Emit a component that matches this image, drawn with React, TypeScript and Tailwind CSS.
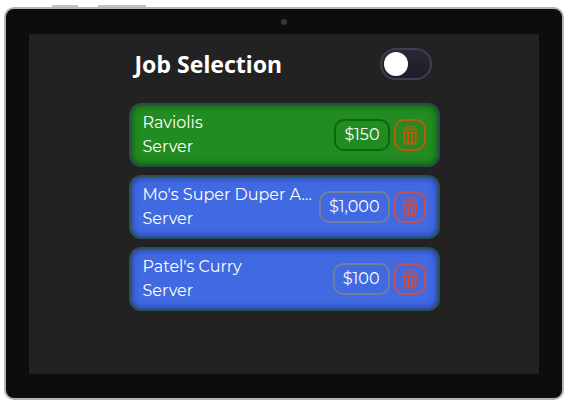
import { useState } from 'react'
import clsx from 'clsx'

type Job = {
  id: number
  business: string
  role: string
  pay: number
}

const initialJobs: Job[] = [
  { id: 1, business: 'Raviolis', role: 'Server', pay: 150 },
  { id: 2, business: "Mo's Super Duper Asian Kitchen", role: 'Server', pay: 1000 },
  { id: 3, business: "Patel's Curry", role: 'Server', pay: 100 },
]

const MAX_NAME_LENGTH = 18

const shorten = (name: string) =>
  name.length > MAX_NAME_LENGTH ? `${name.slice(0, MAX_NAME_LENGTH)}...` : name

function TrashIcon() {
  return (
    <svg viewBox="0 0 18 20" className="h-5 w-[18px]" fill="none" stroke="currentColor" aria-hidden="true">
      <path d="M6.3 4V2.4c0-.8.5-1.3 1.2-1.3h3c.7 0 1.2.5 1.2 1.3V4" strokeWidth="1.4" />
      <path d="M.8 4.4h16.4" strokeWidth="1.6" />
      <path d="M2.8 7.2h12.4l-.9 11.3H3.7z" strokeWidth="2" />
      <path d="M7.1 7.2v11.3M10.9 7.2v11.3" strokeWidth="1.9" />
    </svg>
  )
}

function Toggle() {
  const [on, setOn] = useState(false)

  return (
    <label className="relative block h-8 w-13 cursor-pointer">
      <input
        type="checkbox"
        role="switch"
        aria-label="On duty"
        checked={on}
        onChange={(e) => setOn(e.target.checked)}
        className="block h-8 w-13 cursor-pointer appearance-none rounded-full border-2 border-[#413f4d] bg-linear-to-b from-[#292935] to-[#1d1d27]"
      />
      <span
        className={clsx(
          'pointer-events-none absolute top-1 left-1 size-6 rounded-full bg-white transition-transform',
          on && 'translate-x-5'
        )}
      />
    </label>
  )
}

type JobCardProps = {
  job: Job
  active: boolean
  onSelect: () => void
  onRemove: () => void
}

function JobCard({ job, active, onSelect, onRemove }: JobCardProps) {
  return (
    <li
      className={clsx(
        'flex items-center rounded-xl border-2 px-3 py-1.5 text-white',
        active
          ? 'border-[#2b4a4c] bg-[#228b22] shadow-[inset_0_0_7px_#0b4a0b]'
          : 'border-[#29524f] bg-[#4169e1] shadow-[inset_0_0_7px_#1c3080]'
      )}
    >
      <button
        type="button"
        onClick={onSelect}
        className="mr-1 flex-1 cursor-pointer text-left whitespace-nowrap"
      >
        <span className="block">{shorten(job.business)}</span>
        <span className="block">{job.role}</span>
      </button>
      <span
        className={clsx(
          'mr-1 flex h-8 items-center rounded-[10px] border-2 px-2',
          active ? 'border-[#066b06]' : 'border-[#72809c]'
        )}
      >
        ${job.pay.toLocaleString('en-US')}
      </span>
      <button
        type="button"
        aria-label={`Remove ${job.business}`}
        onClick={onRemove}
        className={clsx(
          'flex size-8 shrink-0 cursor-pointer items-center justify-center rounded-[10px] border-2',
          active ? 'border-[#c4570b] text-[#c4570b]' : 'border-[#c94f4a] text-[#d04c38]'
        )}
      >
        <TrashIcon />
      </button>
    </li>
  )
}

export default function App() {
  const [jobs, setJobs] = useState(initialJobs)
  const [selectedId, setSelectedId] = useState(1)

  return (
    <div className="flex min-h-screen flex-col bg-white pt-[5px] pr-[6px] pb-[6px] pl-1 font-['Montserrat','Inter',sans-serif]">
      {/* Volume and power buttons */}
      <div className="flex h-0.5 gap-5 pl-12">
        <div className="w-[26px] bg-[#c4c4c4]" />
        <div className="w-12 bg-[#c4c4c4]" />
      </div>

      {/* Tablet body */}
      <div className="flex flex-1 flex-col rounded-[10px] border-2 border-[#b4b4b4] bg-[#0d0d0d] px-[23px] pb-6">
        <div className="flex h-[25px] items-center justify-center">
          <div className="size-1.5 rounded-full bg-[#373737]" />
        </div>

        {/* Screen */}
        <main className="flex-1 bg-[#222222] px-4 pt-3.5 pb-6">
          <div className="mx-auto max-w-[311px]">
            <header className="flex items-center justify-between pr-2 pl-1.5">
              <h1 className="font-['Noto_Sans',sans-serif] text-[23px] leading-8 font-bold text-white">
                Job Selection
              </h1>
              <Toggle />
            </header>

            <ul className="mt-[23px] flex flex-col gap-2">
              {jobs.map((job) => (
                <JobCard
                  key={job.id}
                  job={job}
                  active={job.id === selectedId}
                  onSelect={() => setSelectedId(job.id)}
                  onRemove={() => setJobs(jobs.filter((j) => j.id !== job.id))}
                />
              ))}
            </ul>
          </div>
        </main>
      </div>
    </div>
  )
}
